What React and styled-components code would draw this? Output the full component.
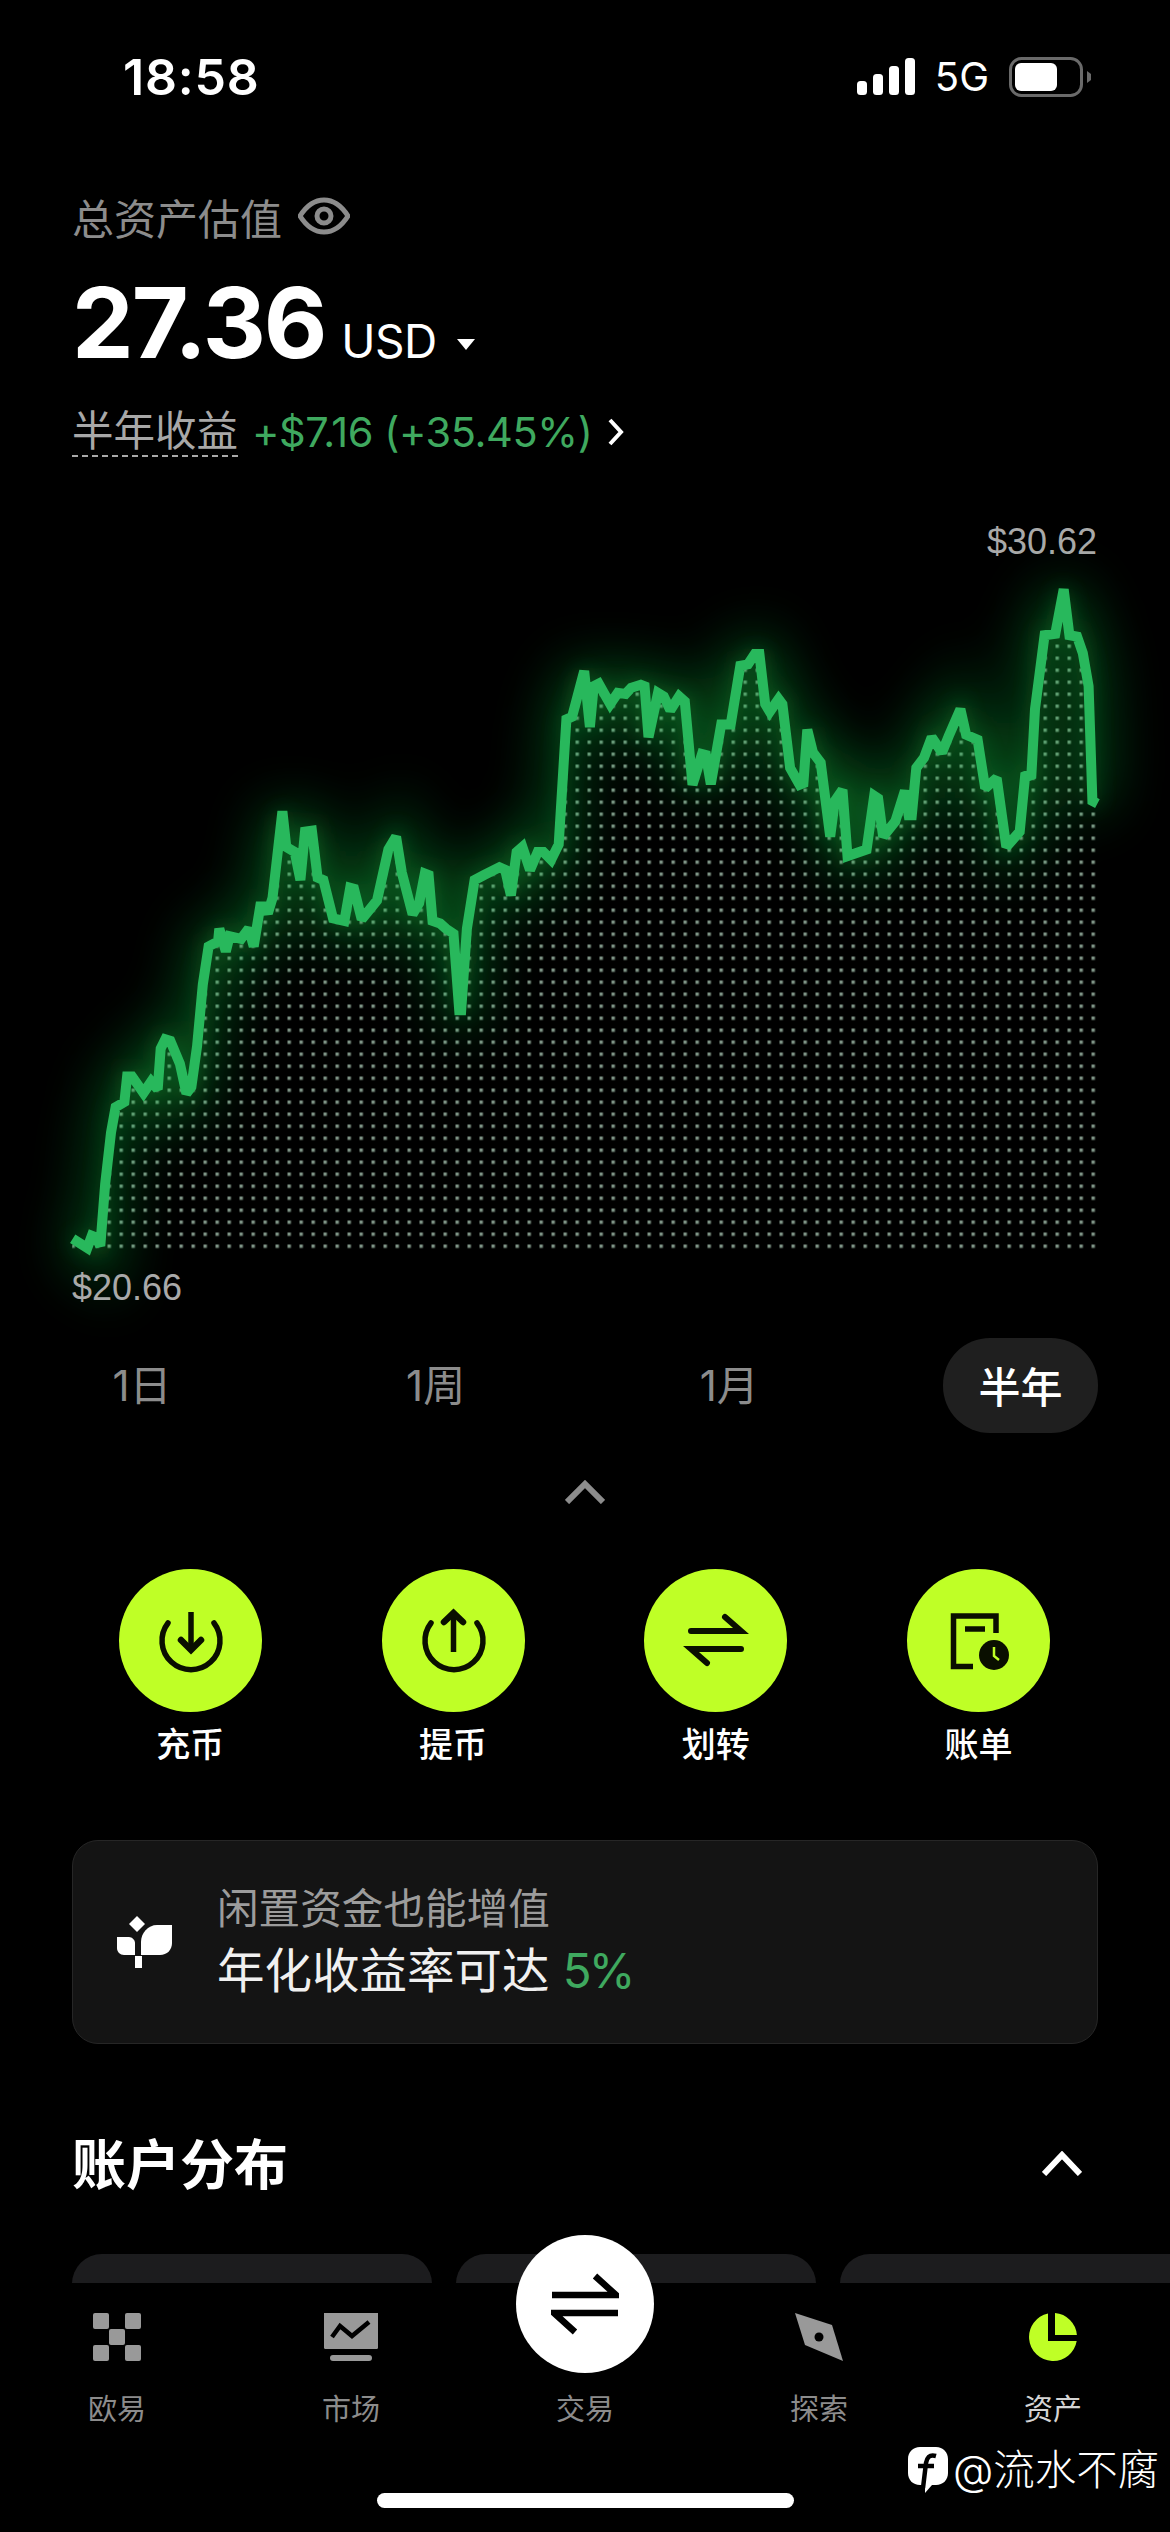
import React from 'react'
import styled, { createGlobalStyle } from 'styled-components'

const SANS = `Inter, "Noto Sans CJK SC", sans-serif`
const LIME = '#bfff26'
const GREY = '#8c8c8c'
const PROFIT = '#3fa95f'

const GlobalStyle = createGlobalStyle`
  html, body { margin: 0; padding: 0; background: #000; }
  * { box-sizing: border-box; }
`

const Page = styled.div`
  position: relative;
  width: 1170px;
  height: 2532px;
  overflow: hidden;
  background: #000;
  color: #fff;
  font-family: ${SANS};
`

const StatusBar = styled.div`
  display: flex;
  justify-content: space-between;
  align-items: center;
  height: 154px;
  padding: 0 79px 0 123px;
`
const Clock = styled.div`
  font-size: 50px;
  font-weight: 600;
  letter-spacing: 0.8px;
`
const StatusIcons = styled.div`
  display: flex;
  align-items: center;
  gap: 20px;
`
const NetLabel = styled.span`
  font-size: 40px;
  font-weight: 400;
  line-height: 40px;
`

const Summary = styled.div`
  padding: 0 72px;
`
const TitleRow = styled.div`
  display: flex;
  align-items: center;
  gap: 16px;
  height: 44px;
  margin-top: 40px;
  font-size: 42px;
  color: ${GREY};
`
const AmountRow = styled.div`
  display: flex;
  align-items: baseline;
  height: 100px;
  margin-top: 35px;
  line-height: 100px;
`
const Amount = styled.span`
  font-size: 98px;
  font-weight: 700;
  letter-spacing: -2.1px;
`
const Currency = styled.span`
  margin-left: 16px;
  font-size: 46px;
  font-weight: 400;
  letter-spacing: -0.6px;
`
const Caret = styled.span`
  align-self: center;
  margin: 42px 0 0 20px;
  border-left: 9px solid transparent;
  border-right: 9px solid transparent;
  border-top: 11px solid #fff;
`
const ProfitRow = styled.div`
  display: flex;
  align-items: center;
  height: 50px;
  margin-top: 34px;
  font-size: 41.5px;
`
const ProfitLabel = styled.span`
  color: #a8a8a8;
  line-height: 48px;
  border-bottom: 2px dashed #a8a8a8;
`
const ProfitValue = styled.span`
  margin-left: 14px;
  color: ${PROFIT};
  letter-spacing: -0.4px;
`

const ChartLabel = styled.div`
  height: 36px;
  padding: 0 73px 0 72px;
  font-family: "Liberation Sans", sans-serif;
  font-size: 36px;
  line-height: 36px;
  color: #a9a9a9;
  text-align: ${p => p.$align};
`
const HighLabel = styled(ChartLabel)`
  margin-top: 67px;
`
const ChartSvg = styled.svg`
  display: block;
  width: 1170px;
  height: 710px;
  overflow: visible;
`

const Tabs = styled.div`
  display: flex;
  justify-content: space-between;
  margin-top: 32px;
  padding: 0 72px 0 62px;
`
const Tab = styled.div`
  display: flex;
  align-items: center;
  justify-content: center;
  width: 155px;
  height: 95px;
  padding: 0 0 ${p => (p.$active ? 3 : 7)}px ${p => (p.$active ? 0 : 5)}px;
  border-radius: 47px;
  font-size: 42px;
  color: ${p => (p.$active ? '#fff' : GREY)};
  font-weight: ${p => (p.$active ? 500 : 400)};
  background: ${p => (p.$active ? '#1f1f1f' : 'transparent')};
`
const CollapseRow = styled.div`
  display: flex;
  justify-content: center;
  margin-top: 47px;
`

const Actions = styled.div`
  display: grid;
  grid-template-columns: repeat(4, 262.7px);
  margin-top: 65px;
  padding-left: 59px;
`
const Action = styled.div`
  display: flex;
  flex-direction: column;
  align-items: center;
  gap: 13px;
`
const ActionCircle = styled.svg`
  display: block;
  width: 143px;
  height: 143px;
`
const ActionLabel = styled.div`
  font-size: 34px;
  font-weight: 500;
  line-height: 40px;
`

const PromoCard = styled.div`
  display: flex;
  align-items: center;
  gap: 44px;
  height: 204px;
  margin: 75px 72px 0;
  padding-left: 43px;
  background: #141414;
  border: 1px solid #262626;
  border-radius: 26px;
`
const PromoText = styled.div`
  display: flex;
  flex-direction: column;
`
const PromoTitle = styled.div`
  font-size: 41.6px;
  line-height: 58px;
  color: #9c9c9c;
`
const PromoRate = styled.div`
  font-size: 47.5px;
  line-height: 66px;
  color: #f0f0f0;
`
const Percent = styled.span`
  color: ${PROFIT};
  letter-spacing: -3px;
`

const SectionHead = styled.div`
  display: flex;
  justify-content: space-between;
  align-items: center;
  height: 70px;
  margin-top: 84px;
  padding: 0 88px 0 72px;
`
const SectionTitle = styled.div`
  margin-top: -4px;
  font-size: 54px;
  font-weight: 600;
`

const AccountRow = styled.div`
  display: flex;
  gap: 24px;
  height: 29px;
  margin-top: 56px;
  padding-left: 72px;
  overflow: hidden;
`
const AccountCard = styled.div`
  flex: 0 0 360px;
  height: 200px;
  background: #1c1c1e;
  border-radius: 30px;
`

const Nav = styled.div`
  position: relative;
  height: 249px;
  background: #000;
`
const NavItems = styled.div`
  display: grid;
  grid-template-columns: repeat(5, 234px);
  padding-top: 30px;
`
const NavItem = styled.div`
  display: flex;
  flex-direction: column;
  align-items: center;
  font-size: 29px;
  line-height: 40px;
  color: ${p => (p.$active ? '#d4d4d4' : GREY)};
`
const NavIcon = styled.svg`
  display: block;
  width: 54px;
  height: 48px;
  margin-bottom: 29px;
`
const NavSlot = styled.div`
  position: relative;
  width: 54px;
  height: 48px;
  margin-bottom: 29px;
`
const TradeButton = styled.div`
  position: absolute;
  top: -78px;
  left: -42px;
  display: flex;
  align-items: center;
  justify-content: center;
  width: 138px;
  height: 138px;
  border-radius: 50%;
  background: #fff;
`
const Watermark = styled.div`
  position: absolute;
  top: 162px;
  left: 908px;
  display: flex;
  align-items: center;
  gap: 5px;
  font-size: 41.5px;
  line-height: 50px;
  font-weight: 300;
  color: #fff;
  white-space: nowrap;
`
const HomeBar = styled.div`
  position: absolute;
  top: 210px;
  left: 377px;
  width: 417px;
  height: 15px;
  border-radius: 8px;
  background: #fff;
`

// traced from the reference, x / y scaled below to page pixels
const LEFT = [
  [190,1448],[228,1466],[240,1442],[250,1445],[262,1462],[275,1340],[290,1240],[302,1190],[325,1180],[332,1130],
  [345,1130],[375,1162],[395,1140],[412,1155],[420,1075],[432,1057],[445,1060],[470,1105],[487,1163],[500,1150],
  [515,1070],[530,950],[545,875],[570,865],[573,840],[590,885],[600,855],[630,860],[650,840],[663,875],[680,797],
  [690,797],[700,810],[712,780],[738,610],[748,680],[770,690],[785,745],[797,650],[815,648],[830,740],[845,745],
  [870,820],[900,825],[915,760],[925,762],[945,822],[985,785],[1015,685],[1035,660],[1050,730],[1078,812],[1095,790],
  [1110,732],[1120,735],[1130,825],[1150,830],[1165,840],[1185,850],[1200,1000],[1205,1000],[1220,840],[1240,745],
  [1265,735],[1305,720],[1320,725],[1335,775],[1350,690],[1365,680],[1385,725],[1405,690],[1420,690],[1440,705],
  [1460,675],[1480,430],[1495,425],
]
const RIGHT = [
  [37,335],[52,445],[62,365],[75,360],[105,400],[125,378],[145,380],[160,368],[185,362],[195,365],[205,465],[230,378],
  [245,385],[262,412],[285,385],[300,395],[320,558],[345,498],[355,500],[368,557],[395,440],[420,440],[445,325],
  [465,322],[483,302],[495,302],[510,400],[522,415],[545,390],[555,400],[575,525],[600,558],[610,555],[620,450],
  [635,495],[655,515],[680,660],[692,590],[712,568],[725,698],[775,685],[795,580],[805,585],[818,660],[850,630],
  [875,570],[885,618],[893,618],[905,525],[925,505],[945,465],[972,495],[990,462],[1020,410],[1035,460],[1065,470],
  [1085,565],[1115,545],[1140,680],[1175,650],[1190,535],[1205,545],[1215,410],[1240,265],[1268,262],[1290,175],
  [1305,265],[1325,268],[1340,300],[1355,365],[1365,590],[1378,595],
]
const toPage = (offset) => ([x, y]) => `${(offset + x / 2.613).toFixed(1)},${(500 + y / 1.96).toFixed(1)}`
const LINE = [...LEFT.map(toPage(0)), ...RIGHT.map(toPage(570))].join(' ')
const AREA = `${LINE} 1097,1250 72,1250`

function Chart() {
  return (
    <ChartSvg viewBox="0 560 1170 710">
      <defs>
        <pattern id="dots" patternUnits="userSpaceOnUse" x="71.5" y="1244.5" width="12" height="12">
          <rect width="3.4" height="3.4" fill="#7f9587" />
        </pattern>
        <clipPath id="under">
          <polygon points={AREA} />
        </clipPath>
        <filter id="wide" filterUnits="userSpaceOnUse" x="-100" y="400" width="1400" height="1000">
          <feGaussianBlur stdDeviation="28" />
        </filter>
        <filter id="tight" filterUnits="userSpaceOnUse" x="-100" y="400" width="1400" height="1000">
          <feGaussianBlur stdDeviation="10" />
        </filter>
      </defs>
      <rect x="71" y="560" width="1027" height="700" fill="url(#dots)" clipPath="url(#under)" />
      <polyline points={LINE} fill="none" stroke="#0fb53c" strokeWidth="34" opacity="0.42" filter="url(#wide)" />
      <polyline points={LINE} fill="none" stroke="#15b845" strokeWidth="10" opacity="0.28" filter="url(#tight)" />
      <polyline points={LINE} fill="none" stroke="#28b85c" strokeWidth="10" strokeLinejoin="miter" strokeMiterlimit="2" />
    </ChartSvg>
  )
}

const DepositIcon = () => (
  <ActionCircle viewBox="0 0 143 143">
    <circle cx="71.5" cy="71.5" r="71.5" fill={LIME} />
    <g fill="none" stroke="#0a0f00" strokeWidth="5.5" strokeLinecap="round">
      <path d="M49 54A29 29 0 1 0 95 54" />
      <path d="M72 43V80" strokeLinecap="butt" />
      <path d="M62 71L72 81L82 71" strokeWidth="6.5" />
    </g>
  </ActionCircle>
)
const WithdrawIcon = () => (
  <ActionCircle viewBox="0 0 143 143">
    <circle cx="71.5" cy="71.5" r="71.5" fill={LIME} />
    <g fill="none" stroke="#0a0f00" strokeWidth="5.5" strokeLinecap="round">
      <path d="M49 54A29 29 0 1 0 95 54" />
      <path d="M71.5 46V83" strokeLinecap="butt" />
      <path d="M62 53L71.5 44L81 53" strokeWidth="6.5" />
    </g>
  </ActionCircle>
)
const TransferIcon = () => (
  <ActionCircle viewBox="0 0 143 143">
    <circle cx="71.5" cy="71.5" r="71.5" fill={LIME} />
    <path d="M47 62H97L81 48M97 80H47L63 94" fill="none" stroke="#0a0f00" strokeWidth="6" strokeLinecap="round" strokeLinejoin="miter" />
  </ActionCircle>
)
const BillIcon = () => (
  <ActionCircle viewBox="0 0 143 143">
    <circle cx="71.5" cy="71.5" r="71.5" fill={LIME} />
    <path d="M89 64V47H46.5V97.5H66M58 60H78" fill="none" stroke="#0a0f00" strokeWidth="5.5" />
    <circle cx="87" cy="86" r="15" fill="#0a0f00" />
    <path d="M87 78V87L92 91" fill="none" stroke={LIME} strokeWidth="2.5" />
  </ActionCircle>
)

const ACTIONS = [
  { label: '充币', Icon: DepositIcon },
  { label: '提币', Icon: WithdrawIcon },
  { label: '划转', Icon: TransferIcon },
  { label: '账单', Icon: BillIcon },
]

export default function App() {
  return (
    <Page>
      <GlobalStyle />
      <StatusBar>
        <Clock>18:58</Clock>
        <StatusIcons>
          <svg width="58" height="38" viewBox="0 0 58 38">
            <rect x="0" y="23" width="10" height="14" rx="3.5" fill="#fff" />
            <rect x="16" y="16" width="10" height="21" rx="3.5" fill="#fff" />
            <rect x="32" y="8" width="10" height="29" rx="3.5" fill="#fff" />
            <rect x="48" y="0" width="10" height="37" rx="3.5" fill="#fff" />
          </svg>
          <NetLabel>5G</NetLabel>
          <svg width="82" height="40" viewBox="0 0 82 40">
            <rect x="1.5" y="1.5" width="71" height="37" rx="11" fill="none" stroke="#6a6a6a" strokeWidth="3" />
            <rect x="6" y="6" width="42" height="28" rx="6" fill="#fff" />
            <path d="M78 14L82 17V23L78 26Z" fill="#6a6a6a" />
          </svg>
        </StatusIcons>
      </StatusBar>

      <Summary>
        <TitleRow>
          总资产估值
          <svg width="52" height="38" viewBox="0 0 52 38" fill="none" stroke={GREY} strokeWidth="5">
            <path d="M2 19C9 8 17 3 26 3S43 8 50 19C43 30 35 35 26 35S9 30 2 19Z" />
            <circle cx="26" cy="19" r="7" />
          </svg>
        </TitleRow>
        <AmountRow>
          <Amount>27.36</Amount>
          <Currency>USD</Currency>
          <Caret />
        </AmountRow>
        <ProfitRow>
          <ProfitLabel>半年收益</ProfitLabel>
          <ProfitValue>+$7.16 (+35.45%)</ProfitValue>
          <svg width="20" height="28" viewBox="0 0 20 28" fill="none" stroke="#fff" strokeWidth="4" style={{ marginLeft: 14 }}>
            <path d="M4 2L15 14L4 26" />
          </svg>
        </ProfitRow>
      </Summary>

      <HighLabel $align="right">$30.62</HighLabel>
      <Chart />
      <ChartLabel $align="left">$20.66</ChartLabel>

      <Tabs>
        <Tab>1日</Tab>
        <Tab>1周</Tab>
        <Tab>1月</Tab>
        <Tab $active>半年</Tab>
      </Tabs>
      <CollapseRow>
        <svg width="40" height="24" viewBox="0 0 40 24" fill="none" stroke={GREY} strokeWidth="6">
          <path d="M2 22L20 4L38 22" />
        </svg>
      </CollapseRow>

      <Actions>
        {ACTIONS.map(({ label, Icon }) => (
          <Action key={label}>
            <Icon />
            <ActionLabel>{label}</ActionLabel>
          </Action>
        ))}
      </Actions>

      <PromoCard>
        <svg width="57" height="53" viewBox="16 14 57 53" fill="#fff">
          <path d="M37 14L45 22L37 30L29 22Z" />
          <path d="M17 35H29C32 35 35 38 35 41V53H24C20 53 17 50 17 46Z" />
          <path d="M72 23V41C72 48 67 53 60 53H41V40C41 31 48 23 57 23Z" />
          <rect x="35" y="54" width="7" height="12" />
        </svg>
        <PromoText>
          <PromoTitle>闲置资金也能增值</PromoTitle>
          <PromoRate>年化收益率可达 <Percent>5%</Percent></PromoRate>
        </PromoText>
      </PromoCard>

      <SectionHead>
        <SectionTitle>账户分布</SectionTitle>
        <svg width="40" height="25" viewBox="0 0 40 25" fill="none" stroke="#fff" strokeWidth="6">
          <path d="M2 23L20 4L38 23" />
        </svg>
      </SectionHead>

      <AccountRow>
        <AccountCard />
        <AccountCard />
        <AccountCard />
      </AccountRow>

      <Nav>
        <NavItems>
          <NavItem>
            <NavIcon viewBox="0 0 54 48" fill="#999">
              <rect x="3" y="0" width="16" height="16" rx="2" />
              <rect x="35" y="0" width="16" height="16" rx="2" />
              <rect x="19" y="16" width="16" height="16" rx="2" />
              <rect x="3" y="32" width="16" height="16" rx="2" />
              <rect x="35" y="32" width="16" height="16" rx="2" />
            </NavIcon>
            欧易
          </NavItem>
          <NavItem>
            <NavIcon viewBox="0 0 54 48">
              <rect x="0" y="-3" width="54" height="39" rx="1.5" fill="#999" />
              <rect x="6" y="42" width="42" height="6" rx="3" fill="#999" />
              <path d="M8 24L16 13L28 23L45 9" fill="none" stroke="#000" strokeWidth="4.5" />
            </NavIcon>
            市场
          </NavItem>
          <NavItem>
            <NavSlot>
              <TradeButton>
                <svg width="68" height="62" viewBox="0 0 68 62" fill="none" stroke="#000" strokeWidth="6.5">
                  <path d="M1 22H65L44 3M67 40H3L24 59" />
                </svg>
              </TradeButton>
            </NavSlot>
            交易
          </NavItem>
          <NavItem>
            <NavIcon viewBox="0 0 54 48">
              <path d="M3 0L40 12L51 48L13 32Z" fill="#999" />
              <circle cx="27" cy="24" r="4.5" fill="#000" />
            </NavIcon>
            探索
          </NavItem>
          <NavItem $active>
            <NavIcon viewBox="-3 0 54 48" fill={LIME}>
              <path d="M19 0.5A24 24 0 1 0 47.7 28H19Z" />
              <path d="M26 0.1A24 24 0 0 1 47.9 22H26Z" />
            </NavIcon>
            资产
          </NavItem>
        </NavItems>
        <Watermark>
          <svg width="40" height="46" viewBox="0 0 40 46">
            <path d="M12 0H28C35 0 40 5 40 12V26C40 33 35 38 28 38H24L17 46V38H12C5 38 0 33 0 26V12C0 5 5 0 12 0Z" fill="#fff" />
            <path d="M28 9C21 7 19 11 18 16L15 41M10 19H26" fill="none" stroke="#000" strokeWidth="4.5" />
          </svg>
          @流水不腐
        </Watermark>
        <HomeBar />
      </Nav>
    </Page>
  )
}
